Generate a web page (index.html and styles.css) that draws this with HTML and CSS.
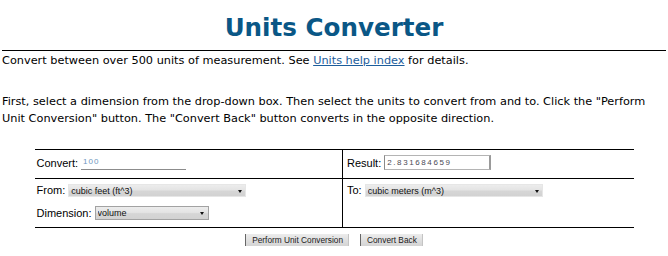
FILE: index.html
```html
<!DOCTYPE html>
<html lang="en">
<head>
    <meta charset="UTF-8">
    <meta name="viewport" content="width=device-width, initial-scale=1.0">
    <title>Units Converter</title>
    <link rel="stylesheet" href="styles.css">
</head>
<body>
    <h1 class="title">Units Converter</h1>
    <hr class="rule">
    <p class="intro">Convert between over 500 units of measurement. See <a href="#">Units help index</a> for details.</p>
    <p class="intro second">First, select a dimension from the drop-down box. Then select the units to convert from and to. Click the "Perform Unit Conversion" button. The "Convert Back" button converts in the opposite direction.</p>

    <form id="convertForm" class="converter">
        <table class="conv-table">
            <tr class="value-row">
                <td class="left-cell">
                    <div class="field">
                        <label for="convertIn">Convert:</label>
                        <input type="text" id="convertIn" class="value-in" value="100">
                    </div>
                </td>
                <td class="right-cell">
                    <div class="field">
                        <label for="resultOut">Result:</label>
                        <input type="text" id="resultOut" class="value-out" value="2.831684659">
                    </div>
                </td>
            </tr>
            <tr class="unit-row">
                <td class="left-cell">
                    <div class="field">
                        <label for="fromUnit">From:</label>
                        <span class="drop flat">
                            <select id="fromUnit">
                                <option>cubic feet (ft^3)</option>
                            </select>
                        </span>
                    </div>
                    <div class="field dimension">
                        <label for="dimension">Dimension:</label>
                        <span class="drop boxed">
                            <select id="dimension">
                                <option>volume</option>
                            </select>
                        </span>
                    </div>
                </td>
                <td class="right-cell">
                    <div class="field">
                        <label for="toUnit">To:</label>
                        <span class="drop flat">
                            <select id="toUnit">
                                <option>cubic meters (m^3)</option>
                            </select>
                        </span>
                    </div>
                </td>
            </tr>
        </table>

        <div class="buttons">
            <button type="button" id="convertButton">Perform Unit Conversion</button>
            <button type="button" id="backButton">Convert Back</button>
        </div>
    </form>
</body>
</html>
```

FILE: styles.css
```css
body
{
    margin: 0 2px;
    font-family: "DejaVu Sans", Verdana, sans-serif;
    font-size: 11.3px;
    color: #000;
    background-color: white;
}

.title
{
    margin: 13px 0 0;
    font-size: 24.6px;
    line-height: 30px;
    text-align: center;
    color: #0a5786;
}

.rule
{
    margin: 7px 0 0;
    height: 0;
    border: none;
    border-top: 1px solid #000;
}

.intro
{
    margin: 1px 0 0;
    line-height: 17px;
}

.intro.second
{
    margin-top: 24px;
}

.intro a
{
    color: #1c5d9c;
}

.converter
{
    margin-top: 22px;
}

.conv-table
{
    width: 599px;
    margin: 0 auto;
    border-collapse: collapse;
    font-family: "Liberation Sans", Arial, sans-serif;
    font-size: 11px;
}

.conv-table td
{
    padding: 0 2px;
    border-top: 1px solid #000;
    border-bottom: 1px solid #000;
    vertical-align: top;
}

.left-cell
{
    width: 308px;
}

.right-cell
{
    border-left: 1px solid #000;
    padding-left: 4px !important;
}

.value-row td
{
    height: 29px;
    padding-top: 5px;
    box-sizing: border-box;
}

.unit-row td
{
    height: 49px;
    padding-top: 5px;
    box-sizing: border-box;
}

.field
{
    display: flex;
    align-items: flex-end;
    gap: 3px;
    line-height: 13px;
}

.unit-row .field
{
    align-items: center;
}

.field.dimension
{
    margin-top: 9px;
}

.value-in,
.value-out
{
    box-sizing: border-box;
    height: 15px;
    margin: 0;
    padding: 0 2px 1px;
    font-family: "Liberation Sans", Arial, sans-serif;
    font-size: 8px;
    outline: none;
}

.value-in
{
    width: 105px;
    border: none;
    border-bottom: 1px solid #8c8c8c;
    color: #6f97c0;
    letter-spacing: 1px;
}

.value-out
{
    width: 107px;
    border: 1px solid #b4b4b4;
    border-left-color: #8a8a8a;
    border-right: 2px solid #9a9a9a;
    color: #4a4a55;
    letter-spacing: 1.6px;
}

.drop
{
    position: relative;
    display: inline-block;
}

.drop select
{
    appearance: none;
    -webkit-appearance: none;
    display: block;
    box-sizing: border-box;
    margin: 0;
    padding: 0 12px 0 2px;
    font-family: "Liberation Sans", Arial, sans-serif;
    font-size: 9px;
    color: #111;
    border-radius: 0;
    background: linear-gradient(#ececec 0%, #e4e4e4 45%, #d6d6d6 55%, #d2d2d2 100%);
}

.drop::after
{
    content: "";
    position: absolute;
    right: 4px;
    top: 50%;
    margin-top: -1px;
    border-left: 2px solid transparent;
    border-right: 2px solid transparent;
    border-top: 3px solid #111;
}

.drop.flat select
{
    width: 178px;
    height: 13px;
    border: 1px solid #e6e6e6;
}

.drop.boxed select
{
    width: 114px;
    height: 14px;
    border: 1px solid #a2a2a2;
}

.drop.boxed::after
{
    right: 5px;
}

.buttons
{
    display: flex;
    justify-content: center;
    gap: 11px;
    margin-top: 6px;
}

.buttons button
{
    height: 12px;
    margin: 0;
    padding: 0 5px 0 6px;
    font-family: "Liberation Sans", Arial, sans-serif;
    font-size: 8.3px;
    line-height: 11px;
    color: #1a1a1a;
    border: none;
    border-left: 1px solid #666;
    border-right: 1px solid #c4c4c4;
    border-radius: 0;
    background: linear-gradient(#ececec, #d4d4d4);
    cursor: pointer;
}
```
